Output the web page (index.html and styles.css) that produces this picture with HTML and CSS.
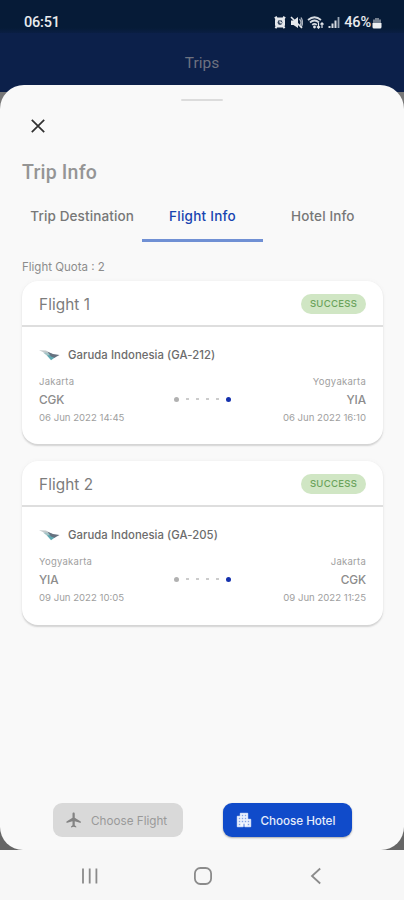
FILE: index.html
```html
<!DOCTYPE html>
<html lang="en">
<head>
<meta charset="utf-8">
<title>Trips</title>
<link rel="stylesheet" href="styles.css">
</head>
<body>
<svg width="0" height="0" class="defs">
  <symbol id="garuda" viewBox="0 0 22 14">
    <path d="M0 2.200 7 2.400 13 6 9 6.300Z" fill="#c3c9cb"/>
    <path d="M4 4.500 12 5 14 9 9 8.500Z" fill="#a3c3c6"/>
    <path d="M8 7.500 14 6.500 16.500 9 12 12.300Z" fill="#5fa8b0"/>
    <path d="M8.500 3.800 14 6 20.500 7 15.500 9.800 12 8.500Z" fill="#66717f"/>
  </symbol>
</svg>
<div class="phone">
  <header class="status">
    <span class="time">06:51</span>
    <div class="status-icons">
      <svg width="12" height="13" viewBox="0 0 12 13"><path d="M.8 2.300 3 .8M11.200 2.300 9 .8" stroke="#e5e8ec" stroke-width="2"/><rect x="1" y="1.500" width="10" height="10" rx="3" fill="#e5e8ec"/><path d="M1.500 12.300 3 10M10.500 12.300 9 10" stroke="#e5e8ec" stroke-width="2"/><circle cx="6" cy="6.500" r="2.400" fill="#34465f"/><path d="M6 4.500v2.300h2" stroke="#fff" fill="none"/></svg>
      <svg width="13" height="13" viewBox="0 0 13 13"><path d="M1 4.500h2.500L8 1v11L3.500 9H1Z" fill="#e5e8ec"/><path d="M9.500 3q3 3.500 0 7M11 1.500q3 5 0 10" stroke="#abb3be" stroke-width="1.300" fill="none"/><path d="M1 1 12 12" stroke="#e5e8ec" stroke-width="1.600"/></svg>
      <svg width="17" height="13" viewBox="0 0 17 13"><path d="M1 4q6.500-5.500 13 0M3 6.500q4.500-4 9 0M5.200 8.800q2.300-2 4.600 0" stroke="#d5dae0" stroke-width="1.700" fill="none"/><circle cx="7.500" cy="11" r="1.400" fill="#e5e8ec"/><path d="M11.500 7v5M10 10.500l1.500 1.700 1.500-1.700M15 12V7M13.500 8.500 15 6.800l1.500 1.700" stroke="#e5e8ec" stroke-width="1.200" fill="none"/></svg>
      <svg width="12" height="13" viewBox="0 0 12 13"><path d="M1.500 12v-2M4.500 12V7.500M7.500 12V4.500" stroke="#d5dae0" stroke-width="2"/><path d="M10.500 12V1" stroke="#9aa5b3" stroke-width="1.800"/></svg>
      <span class="percent">46%</span>
      <svg width="10" height="13" viewBox="0 0 10 13"><path d="M3 2h4v1.500h2v4H1v-4h2Z" fill="#75808f"/><path d="M.5 7h9v4q0 1.500-1.500 1.500H2Q.5 12.500.5 11Z" fill="#eef0f2"/></svg>
    </div>
  </header>
  <div class="appbar">Trips</div>
  <div class="scrim">
    <main class="sheet">
      <div class="handle"></div>
      <svg class="close" width="16" height="16" viewBox="0 0 16 16"><path d="M1.800 1.800 14.200 14.200M14.200 1.800 1.800 14.200" stroke="#303030" stroke-width="1.700"/></svg>
      <h1>Trip Info</h1>
      <nav class="tabs">
        <div class="tab">Trip Destination</div>
        <div class="tab active">Flight Info</div>
        <div class="tab">Hotel Info</div>
      </nav>
      <p class="quota">Flight Quota : 2</p>

      <section class="card">
        <div class="card-head"><h2>Flight 1</h2><span class="badge">SUCCESS</span></div>
        <div class="card-body">
          <div class="airline"><svg width="22" height="14"><use href="#garuda"/></svg><span>Garuda Indonesia (GA-212)</span></div>
          <div class="route">
            <div class="stop"><span class="city">Jakarta</span><span class="code">CGK</span><span class="date">06 Jun 2022 14:45</span></div>
            <div class="dots"><i class="dot"></i><i class="dash"></i><i class="dash"></i><i class="dash"></i><i class="dash"></i><i class="dot end"></i></div>
            <div class="stop right"><span class="city">Yogyakarta</span><span class="code">YIA</span><span class="date">06 Jun 2022 16:10</span></div>
          </div>
        </div>
      </section>

      <section class="card">
        <div class="card-head"><h2>Flight 2</h2><span class="badge">SUCCESS</span></div>
        <div class="card-body">
          <div class="airline"><svg width="22" height="14"><use href="#garuda"/></svg><span>Garuda Indonesia (GA-205)</span></div>
          <div class="route">
            <div class="stop"><span class="city">Yogyakarta</span><span class="code">YIA</span><span class="date">09 Jun 2022 10:05</span></div>
            <div class="dots"><i class="dot"></i><i class="dash"></i><i class="dash"></i><i class="dash"></i><i class="dash"></i><i class="dot end"></i></div>
            <div class="stop right"><span class="city">Jakarta</span><span class="code">CGK</span><span class="date">09 Jun 2022 11:25</span></div>
          </div>
        </div>
      </section>

      <div class="actions">
        <div class="btn disabled">
          <svg width="18" height="18" viewBox="0 0 24 24"><path d="M21 16v-2l-8-5V3.500c0-.83-.67-1.500-1.500-1.500S10 2.670 10 3.500V9l-8 5v2l8-2.500V19l-2 1.500V22l3.500-1 3.500 1v-1.500L13 19v-5.500l8 2.500z" fill="#838383"/></svg>
          <span>Choose Flight</span>
        </div>
        <div class="btn primary">
          <svg width="18" height="18" viewBox="0 0 24 24"><path d="M17 11V3H7v4H3v14h8v-4h2v4h8V11h-4zM7 19H5v-2h2v2zm0-4H5v-2h2v2zm0-4H5V9h2v2zm4 4H9v-2h2v2zm0-4H9V9h2v2zm0-4H9V5h2v2zm4 8h-2v-2h2v2zm0-4h-2V9h2v2zm0-4h-2V5h2v2zm4 12h-2v-2h2v2zm0-4h-2v-2h2v2z" fill="#f4f7ff" stroke="#f4f7ff" stroke-width=".9"/></svg>
          <span>Choose Hotel</span>
        </div>
      </div>
    </main>
  </div>
  <footer class="navbar">
    <svg width="18" height="18" viewBox="0 0 18 18"><path d="M2 1.500v15M8.700 1.500v15M15.400 1.500v15" stroke="#8b8b8b" stroke-width="1.800"/></svg>
    <svg width="20" height="20" viewBox="0 0 20 20"><rect x="1.900" y="2" width="16.200" height="16" rx="5.500" fill="none" stroke="#8b8b8b" stroke-width="1.800"/></svg>
    <svg width="18" height="18" viewBox="0 0 18 18"><path d="M13.200 1.500 5 9l8.200 7.500" fill="none" stroke="#8b8b8b" stroke-width="1.800"/></svg>
  </footer>
</div>
</body>
</html>
```

FILE: styles.css
```css
* { box-sizing: border-box; }
body { margin: 0; font-family: Inter, "Liberation Sans", sans-serif; }
.defs { display: none; }
.phone { width: 404px; height: 900px; overflow: hidden; display: flex; flex-direction: column; background: #0c204a; }
h1, h2, p { margin: 0; font-weight: 400; }
svg { display: block; flex: none; }

.status { height: 33px; flex: none; padding: 11px 22px 0 24px; display: flex; justify-content: space-between; background: linear-gradient(#061b37 85%, #0a1e43); font-family: Roboto, sans-serif; color: #e9ebee; }
.time { font-size: 14.500px; line-height: 23px; font-weight: 500; letter-spacing: -0.200px; }
.status-icons { display: flex; align-items: center; height: 22px; gap: 4px; }
.percent { font-size: 14.500px; font-weight: 500; letter-spacing: -0.100px; margin-right: -3px; }

.appbar { height: 52px; flex: none; line-height: 60px; text-align: center; font-family: Roboto, sans-serif; font-size: 15.500px; color: #6e7280; }
.scrim { height: 765px; flex: none; background: linear-gradient(#0c204a 7px, #777 7px, #777 40px, #666 41px); }
.sheet { height: 765px; padding: 14px 21px 0 22px; border-radius: 24px 24px 23px 23px; background: #f9f9f9; display: flex; flex-direction: column; }
.handle { width: 42px; height: 2px; margin-left: 159px; background: #dcdcdc; border-radius: 1px; }
.close { margin: 17px 0 0 8px; }
h1 { margin-top: 27px; font-family: Roboto, sans-serif; font-size: 19.500px; line-height: 24px; font-weight: 500; letter-spacing: 0.200px; color: #959595; }

.tabs { display: grid; grid-template-columns: repeat(3, 1fr); margin-top: 15px; height: 42px; }
.tab { padding-top: 6px; line-height: 20px; text-align: center; font-size: 13.500px; font-weight: 500; letter-spacing: 0.120px; color: #777; border-bottom: 3px solid transparent; white-space: nowrap; }
.tab.active { color: #1744b0; border-bottom-color: #7090d4; letter-spacing: 0.250px; }
.quota { margin-top: 17px; line-height: 16px; font-size: 11.500px; color: #8c8c8c; }

.card { height: 163px; flex: none; margin-top: 6px; border-radius: 16px; background: #fff; box-shadow: 0 1.500px 1.500px #d4d4d4, 0 0 4px #f1f1f1; }
.card + .card { margin-top: 17px; height: 164px; }
.card-head { height: 46px; padding: 1px 17px 0; display: flex; align-items: center; justify-content: space-between; border-bottom: 2px solid #dedede; }
h2 { padding-top: 1px; font-size: 15.300px; letter-spacing: 0.100px; color: #7c7c7c; }
.badge { width: 65px; height: 20px; border-radius: 10px; background: #d0e6c4; color: #6ba35b; font-size: 9.500px; letter-spacing: 0.300px; line-height: 20px; text-align: center; font-weight: 500; }
.card-body { padding: 18px 17px 0; }
.airline { height: 20px; display: flex; align-items: center; gap: 7px; font-size: 11.300px; letter-spacing: 0.070px; font-weight: 500; color: #6c6c6c; }
.route { display: flex; justify-content: space-between; margin-top: 9px; }
.stop { display: flex; flex-direction: column; width: 96px; white-space: nowrap; color: #a0a0a0; }
.right { align-items: flex-end; }
.city { font-size: 9.500px; line-height: 16px; letter-spacing: 0.250px; }
.code { font-size: 11.800px; line-height: 20px; font-weight: 500; letter-spacing: -0.100px; color: #8c8c8c; }
.date { font-size: 9.600px; line-height: 16px; }
.dots { display: flex; align-items: center; justify-content: space-between; width: 57px; height: 6px; margin: 22px 0 0 -1px; }
.dot { width: 5px; height: 5px; border-radius: 50%; background: #b1b1b1; }
.dot.end { background: #1431ad; }
.dash { width: 3px; height: 1.500px; background: #ccc; }

.actions { display: flex; gap: 40px; margin: auto 31px 13px; }
.btn { width: 130px; height: 34px; border-radius: 9px; padding-left: 12px; display: flex; align-items: center; gap: 8px; font-size: 11.700px; white-space: nowrap; }
.btn span { padding-top: 2px; }
.disabled { background: #d9d9d9; color: #999; }
.primary { background: #104bca; color: #e6edfb; font-weight: 500; letter-spacing: -0.050px; box-shadow: 0 1px 2px #aaa; }
.navbar { height: 50px; flex: none; display: flex; align-items: center; justify-content: space-between; padding: 2px 79px 0 81px; background: #f7f7f7; }
```
